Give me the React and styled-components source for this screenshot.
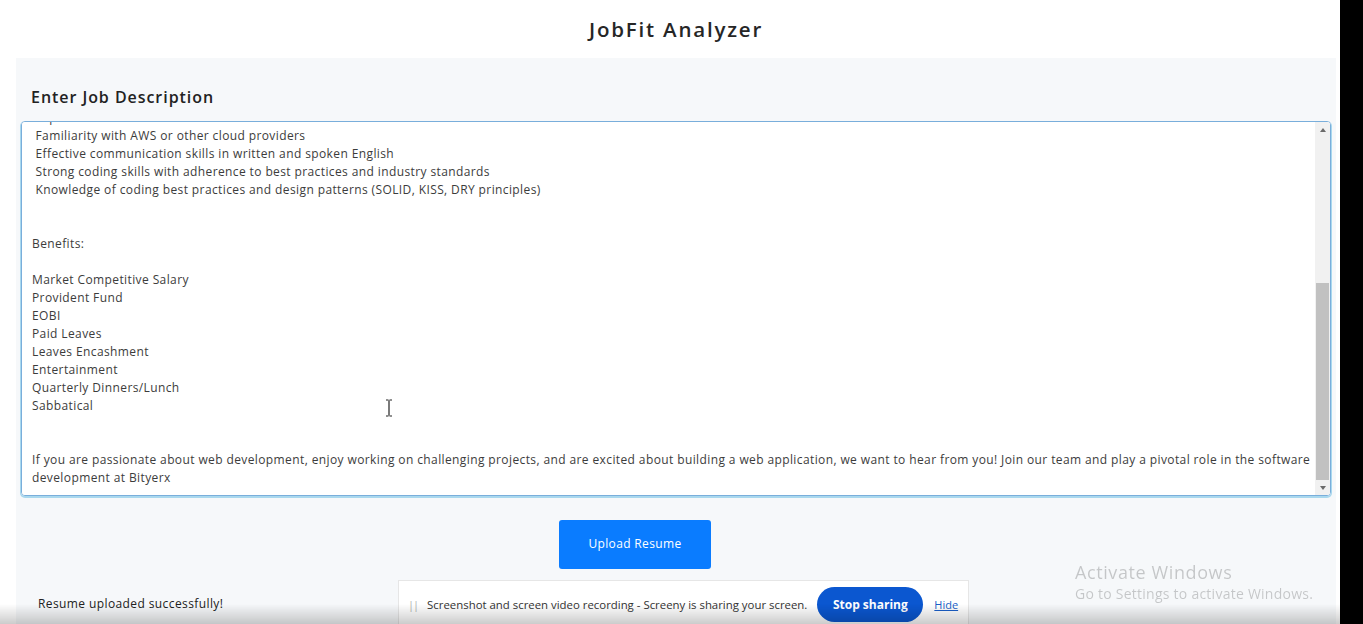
import React, { useLayoutEffect, useRef } from "react"
import styled, { createGlobalStyle } from "styled-components"

const GlobalStyle = createGlobalStyle`
    html, body {
        margin: 0;
        padding: 0;
        height: 100%;
        overflow: hidden;
        background: #ffffff;
        font-family: "Open Sans", "Noto Sans", sans-serif;
    }
    #root {
        height: 100%;
    }
`

const Page = styled.div`
    height: 100vh;
    display: flex;
    flex-direction: column;
    padding: 0 27px 0 16px;
    box-sizing: border-box;
`

const Header = styled.header`
    height: 58px;
    display: flex;
    align-items: center;
    justify-content: center;
`

const Title = styled.h1`
    margin: 0;
    font-size: 20.5px;
    font-weight: 600;
    color: #262626;
    letter-spacing: 1.8px;
`

const Card = styled.main`
    flex: 1;
    background: #f6f8fa;
    padding: 28px 5px 0;
    display: flex;
    flex-direction: column;
`

const Label = styled.label`
    font-size: 16px;
    font-weight: 600;
    color: #222;
    padding-left: 10px;
    line-height: 22px;
    margin-bottom: 13px;
    letter-spacing: 0.95px;
`

const Field = styled.div`
    position: relative;
    height: 375px;
`

const JobText = styled.textarea`
    width: 100%;
    height: 100%;
    box-sizing: border-box;
    resize: none;
    border: 1px solid #79aedb;
    border-radius: 4px;
    box-shadow: 0 1px 0 1px #a9d8ee;
    padding: 6px 18px 8px 10px;
    font-family: "Open Sans", "Noto Sans", sans-serif;
    font-size: 12px;
    letter-spacing: 0.39px;
    line-height: 18px;
    color: #3c3c3c;
    background: #fff;
    outline: none;
    white-space: pre-wrap;
    display: block;
`

const ScrollTrack = styled.div`
    position: absolute;
    top: 1px;
    right: 1px;
    bottom: 1px;
    width: 15px;
    background: #f1f1f1;
    border-radius: 0 3px 3px 0;
    display: flex;
    flex-direction: column;
    align-items: center;
    pointer-events: none;
`

const Arrow = styled.div`
    width: 0;
    height: 0;
    border-left: 3.5px solid transparent;
    border-right: 3.5px solid transparent;
    ${(p) => (p.$down ? "border-top: 4px solid #6a6a6a;" : "border-bottom: 4px solid #6a6a6a;")}
    margin: 6px 0 5px;
`

const Rail = styled.div`
    flex: 1;
    width: 100%;
    position: relative;
`

const Thumb = styled.div`
    position: absolute;
    left: 1px;
    right: 1px;
    bottom: 0;
    background: #c1c1c1;
`

const ButtonRow = styled.div`
    display: flex;
    justify-content: center;
    padding-right: 82px;
    margin-top: 24px;
`

const UploadButton = styled.button`
    width: 152px;
    height: 49px;
    border: none;
    border-radius: 3px;
    background: #0a7cff;
    color: #fff;
    font-family: "Open Sans", sans-serif;
    font-size: 12px;
    letter-spacing: 0.35px;
    padding-bottom: 4px;
    cursor: pointer;
`

const Status = styled.p`
    margin: 26px 0 0 17px;
    font-size: 12px;
    letter-spacing: 0.4px;
    color: #222;
`

const ShareBar = styled.div`
    position: fixed;
    left: 398px;
    top: 580px;
    width: 571px;
    height: 60px;
    box-sizing: border-box;
    background: #fff;
    border: 1px solid #e6e6e6;
    display: flex;
    align-items: flex-start;
    padding: 6px 0 0 9px;
    gap: 6px;
    font-size: 11.4px;
    color: #333;
`

const Grip = styled.span`
    color: #b0b0b0;
    font-size: 11px;
    line-height: 35px;
    letter-spacing: -1px;
    margin-right: 3px;
`

const ShareText = styled.span`
    line-height: 35px;
`

const StopButton = styled.button`
    height: 35px;
    width: 106px;
    padding: 0;
    border: none;
    border-radius: 18px;
    background: #0b57d0;
    color: #fff;
    font-family: "Open Sans", sans-serif;
    font-weight: 700;
    font-size: 12px;
    margin-left: 4px;
`

const HideLink = styled.a`
    line-height: 35px;
    color: #1a5fc8;
    text-decoration: underline;
    font-size: 11px;
    margin-left: 5px;
`

const Watermark = styled.div`
    position: fixed;
    left: 1075px;
    top: 560px;
    color: rgba(0, 0, 0, 0.2);
    font-family: "Open Sans", sans-serif;
`

const WatermarkTitle = styled.div`
    font-size: 18px;
    letter-spacing: 0.6px;
    line-height: 24px;
`

const WatermarkSub = styled.div`
    font-size: 14px;
    letter-spacing: 0.25px;
    line-height: 20px;
`

const FrameEdge = styled.div`
    position: fixed;
    top: 0;
    right: 0;
    width: 23px;
    height: 100vh;
    background: #000;
`

const BottomShade = styled.div`
    position: fixed;
    left: 0;
    right: 23px;
    bottom: 0;
    height: 20px;
    background: linear-gradient(rgba(0, 0, 0, 0), rgba(0, 0, 0, 0.2));
    pointer-events: none;
`

const Cursor = styled.svg`
    position: fixed;
    left: 384px;
    top: 399px;
`

const jobDescription = `Job Title: Web Developer (MERN Stack)
Company: Bityerx

About the Role:

We are looking for a talented Web Developer to join our team and help us build modern web applications.

Responsibilities:

 Develop and maintain web applications using React and Node.js
 Collaborate with designers and product managers
 Write clean, maintainable and well tested code

Requirements:
 Experience with RESTful APIs and Git version control
 Familiarity with AWS or other cloud providers
 Effective communication skills in written and spoken English
 Strong coding skills with adherence to best practices and industry standards
 Knowledge of coding best practices and design patterns (SOLID, KISS, DRY principles)


Benefits:

Market Competitive Salary
Provident Fund
EOBI
Paid Leaves
Leaves Encashment
Entertainment
Quarterly Dinners/Lunch
Sabbatical


If you are passionate about web development, enjoy working on challenging projects, and are excited about building a web application, we want to hear from you! Join our team and play a pivotal role in the software development at Bityerx`

export default function App() {
    const textRef = useRef(null)

    useLayoutEffect(() => {
        const el = textRef.current
        if (el) el.scrollTop = el.scrollHeight
    }, [])

    return (
        <>
            <GlobalStyle />
            <Page>
                <Header>
                    <Title>JobFit Analyzer</Title>
                </Header>
                <Card>
                    <Label htmlFor="job">Enter Job Description</Label>
                    <Field>
                        <JobText id="job" ref={textRef} defaultValue={jobDescription} spellCheck={false} />
                        <ScrollTrack>
                            <Arrow />
                            <Rail>
                                <Thumb style={{ height: 197 }} />
                            </Rail>
                            <Arrow $down />
                        </ScrollTrack>
                    </Field>
                    <ButtonRow>
                        <UploadButton>Upload Resume</UploadButton>
                    </ButtonRow>
                    <Status>Resume uploaded successfully!</Status>
                </Card>
            </Page>
            <Cursor width="10" height="18" viewBox="0 0 10 18">
                <path d="M2 1h2.5M5.5 1H8M5 1.5v15M2 17h2.5M5.5 17H8" stroke="#222" strokeWidth="1.2" fill="none" />
            </Cursor>
            <Watermark>
                <WatermarkTitle>Activate Windows</WatermarkTitle>
                <WatermarkSub>Go to Settings to activate Windows.</WatermarkSub>
            </Watermark>
            <ShareBar>
                <Grip>||</Grip>
                <ShareText>Screenshot and screen video recording - Screeny is sharing your screen.</ShareText>
                <StopButton>Stop sharing</StopButton>
                <HideLink href="#">Hide</HideLink>
            </ShareBar>
            <BottomShade />
            <FrameEdge />
        </>
    )
}
